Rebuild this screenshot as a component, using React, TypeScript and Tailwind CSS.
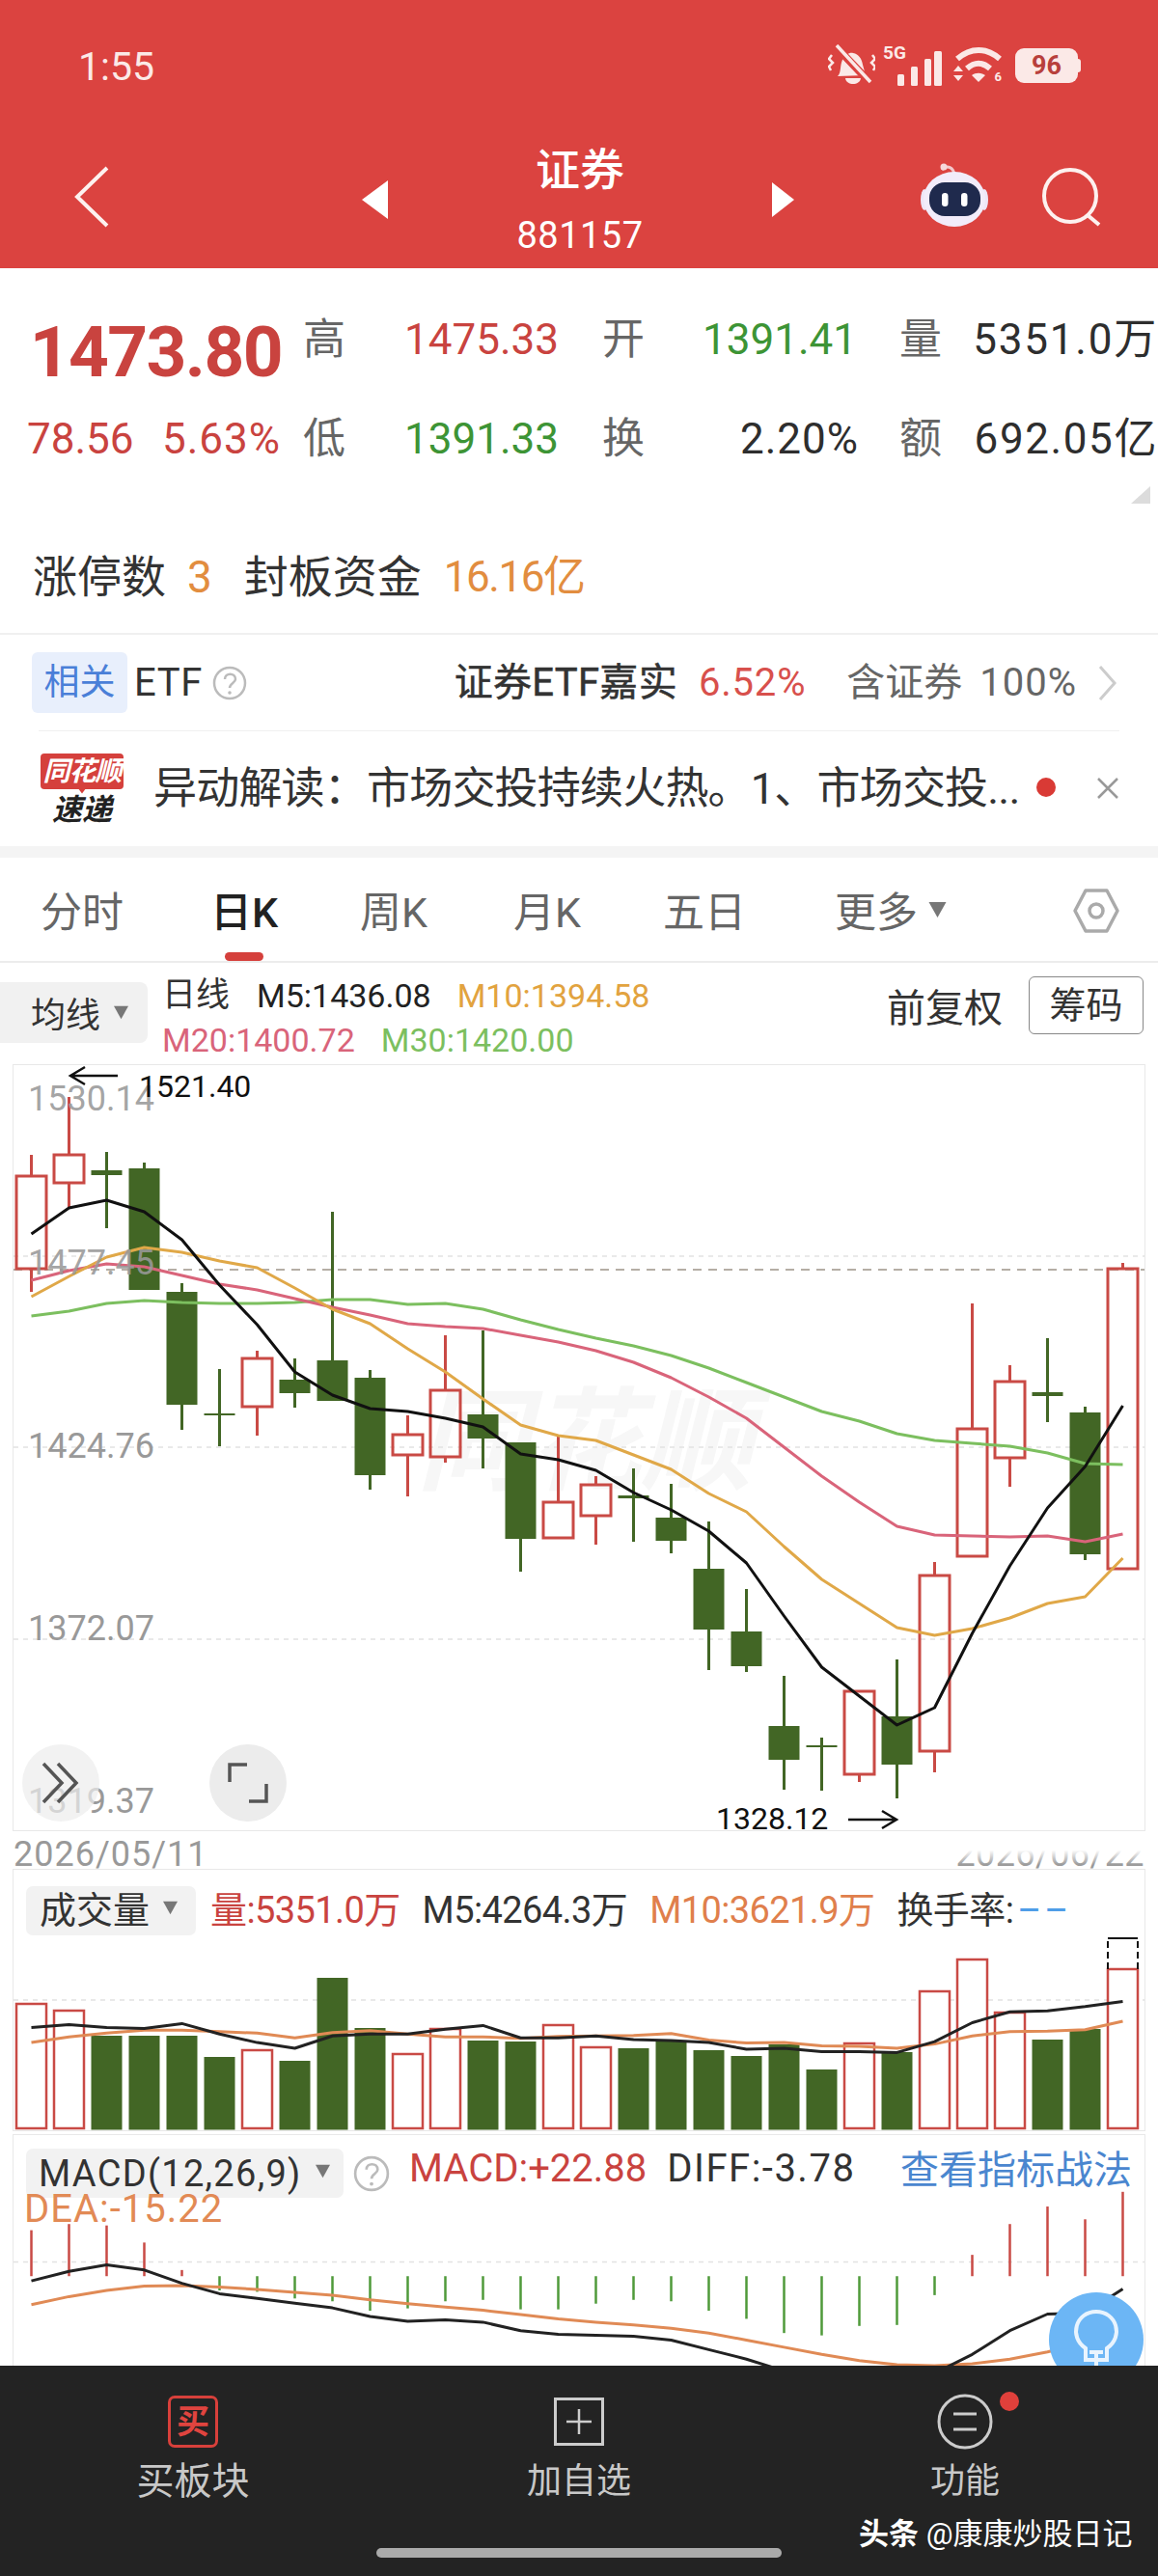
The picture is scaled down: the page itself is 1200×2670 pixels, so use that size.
import React from 'react';

const cx = (i: number) => 32.5 + 39 * i;

// [wickTop, bodyTop, bodyBottom, wickBottom, isRed]
const candles: [number, number, number, number, boolean][] = [
  [1197, 1219, 1315, 1339, true],
  [1137, 1197, 1226, 1252, true],
  [1194, 1213, 1218, 1273, false],
  [1205, 1211, 1337, 1337, false],
  [1330, 1339, 1456, 1482, false],
  [1419, 1465, 1467, 1499, false],
  [1400, 1408, 1458, 1488, true],
  [1408, 1430, 1444, 1459, false],
  [1256, 1410, 1452, 1452, false],
  [1420, 1428, 1529, 1544, false],
  [1467, 1487, 1508, 1551, true],
  [1384, 1441, 1510, 1516, true],
  [1379, 1466, 1491, 1522, false],
  [1495, 1495, 1595, 1629, false],
  [1488, 1557, 1594, 1594, true],
  [1530, 1539, 1571, 1601, true],
  [1522, 1550, 1553, 1598, false],
  [1538, 1573, 1597, 1610, false],
  [1577, 1626, 1689, 1731, false],
  [1647, 1691, 1727, 1733, false],
  [1737, 1789, 1824, 1855, false],
  [1801, 1809, 1811, 1856, false],
  [1752, 1753, 1839, 1847, true],
  [1720, 1779, 1829, 1864, false],
  [1619, 1633, 1815, 1837, true],
  [1351, 1481, 1613, 1613, true],
  [1415, 1432, 1511, 1541, true],
  [1387, 1443, 1447, 1474, false],
  [1458, 1464, 1611, 1617, false],
  [1309, 1315, 1626, 1626, true],
];

const m5 = [1279, 1252, 1244, 1256, 1285, 1332, 1373, 1422, 1446, 1460, 1463, 1470, 1479, 1507, 1513, 1524, 1547, 1565, 1587, 1620, 1675, 1728, 1758, 1788, 1770, 1693, 1623, 1563, 1520, 1457];
const m10 = [1344, 1323, 1303, 1293, 1298, 1307, 1314, 1335, 1357, 1372, 1398, 1422, 1450, 1477, 1488, 1493, 1508, 1523, 1548, 1567, 1603, 1637, 1662, 1687, 1695, 1688, 1677, 1662, 1655, 1615];
const m20 = [1327, 1317, 1310, 1313, 1322, 1331, 1337, 1346, 1355, 1363, 1372, 1375, 1377, 1384, 1391, 1400, 1412, 1428, 1448, 1470, 1500, 1530, 1557, 1582, 1591, 1592, 1593, 1592, 1598, 1590];
const m30 = [1364, 1359, 1351, 1348, 1350, 1351, 1351, 1350, 1347, 1347, 1352, 1351, 1357, 1368, 1378, 1387, 1395, 1405, 1418, 1433, 1448, 1463, 1473, 1486, 1493, 1496, 1499, 1506, 1517, 1518];

const volTops = [2077, 2084, 2110, 2110, 2110, 2132, 2125, 2136, 2050, 2102, 2129, 2103, 2115, 2116, 2099, 2122, 2123, 2116, 2125, 2131, 2119, 2145, 2118, 2127, 2064, 2031, 2086, 2114, 2103, 2041];
const volM5 = [410, 404, 410, 412, 402, 424, 442, 454, 428, 424, 424, 414, 406, 432, 432, 428, 436, 438, 442, 456, 454, 461, 461, 463, 440, 400, 377, 375, 366, 355];
const volM10 = [442, 430, 422, 416, 416, 419, 422, 432, 421, 417, 424, 430, 430, 433, 429, 428, 427, 423, 437, 443, 442, 449, 450, 454, 445, 428, 419, 418, 415, 397];

const macdEnds = [838, 825, 828, 864, 922, 965, 968, 982, 988, 1008, 1003, 988, 985, 1005, 1005, 993, 985, 988, 1008, 1025, 1055, 1060, 1040, 1038, 975, 890, 825, 788, 815, 757];
const macdDiff = [945, 925, 911, 922, 950, 972, 982, 992, 1002, 1020, 1030, 1027, 1032, 1050, 1058, 1060, 1062, 1070, 1090, 1110, 1135, 1160, 1180, 1170, 1140, 1100, 1050, 1015, 1013, 962];
const macdDea = [995, 978, 965, 956, 955, 958, 963, 969, 975, 985, 993, 1000, 1007, 1016, 1025, 1032, 1038, 1045, 1055, 1070, 1085, 1100, 1113, 1122, 1124, 1120, 1110, 1095, 1075, 1050];

const fromZoom = (z: number) => 1900 + z / 2.036;
const pts = (ys: number[]) => ys.map((y, i) => `${cx(i)},${y.toFixed(1)}`).join(' ');

const RED = '#c94a45';
const GREEN = '#426625';

const Line = ({ ys, color, width = 3 }: { ys: number[]; color: string; width?: number }) => (
  <polyline points={pts(ys)} fill="none" stroke={color} strokeWidth={width} strokeLinejoin="round" />
);

const Caret = ({ className }: { className: string }) => (
  <svg viewBox="0 0 20 18" className={className}>
    <path d="M1 1h18L10 17z" fill="#777" />
  </svg>
);

const Help = ({ className }: { className: string }) => (
  <svg viewBox="0 0 36 36" className={className}>
    <circle cx="18" cy="18" r="16" fill="none" stroke="#bbb" strokeWidth="2.5" />
    <path d="M13 14c0-7 11-7 11 0 0 4-6 4-6 9" fill="none" stroke="#bbb" strokeWidth="2.5" />
    <circle cx="18" cy="28" r="1.8" fill="#bbb" />
  </svg>
);

const StatusIcons = () => (
  <div className="flex items-center">
    {/* muted bell */}
    <svg viewBox="858 45 49 44" className="w-[49px] h-[44px]">
      <path d="M868 78c4-4 2-10 5-17 3-6 8-8 11-7 6 1 9 6 10 12l3 11z" fill="#fbe9e7" />
      <path d="M876 80h16c-1 8-15 8-16 0z" fill="#fbe9e7" />
      <path d="M866 47l36 38" stroke="#db4340" strokeWidth="8" />
      <path d="M867 46l35 38" stroke="#fbe9e7" strokeWidth="3.5" />
      <path d="M862 56l-3 4 4 4-4 4 2 4M904 56l3 4-4 4 4 4-2 4" fill="none" stroke="#fbe9e7" strokeWidth="2.5" />
    </svg>
    {/* 5G + signal */}
    <div className="relative w-[61px] h-[42px] ml-[8px]">
      <span className="absolute left-0 -top-[2px] text-[19px] leading-[20px] font-bold text-[#fbe9e7]">5G</span>
      <svg viewBox="0 0 46 36" className="absolute right-0 bottom-0 w-[46px] h-[36px]">
        <rect x="0" y="24" width="7" height="12" rx="1.5" fill="#fbe9e7" />
        <rect x="14" y="16" width="7" height="20" rx="1.5" fill="#fbe9e7" />
        <rect x="26" y="8" width="7" height="28" rx="1.5" fill="#fbe9e7" transform="translate(2 0)" />
        <rect x="38" y="0" width="8" height="36" rx="1.5" fill="#fbe9e7" />
      </svg>
    </div>
    {/* wifi */}
    <div className="relative w-[52px] h-[38px] ml-[12px]">
      <svg viewBox="988 50 52 38" className="w-[52px] h-[38px]">
        <path d="M992 62c14-12 30-12 44 0" fill="none" stroke="#fbe9e7" strokeWidth="6" />
        <path d="M1002 72c8-7 16-7 24 0" fill="none" stroke="#fbe9e7" strokeWidth="6" />
        <path d="M1007 79c4-3 10-3 14 0l-7 7z" fill="#fbe9e7" />
        <path d="M988 75l5-6 5 6zM988 79l5 6 5-6z" fill="#fbe9e7" />
      </svg>
      <span className="absolute right-[2px] bottom-0 text-[13px] leading-[14px] font-bold text-[#fbe9e7]">6</span>
    </div>
    {/* battery */}
    <div className="flex items-center ml-[12px]">
      <div className="w-[65px] h-[36px] rounded-[9px] bg-[#fbe9e7] flex items-center justify-center text-[27px] font-bold text-[#b8403c]">96</div>
      <div className="w-[3px] h-[14px] bg-[#fbe9e7] rounded-r-sm" />
    </div>
  </div>
);

const Robot = () => (
  <svg viewBox="953 170 72 66" className="w-[72px] h-[66px]">
    <path d="M976 177c6-6 12-2 13 5" fill="none" stroke="#f3c8cc" strokeWidth="3" />
    <circle cx="978" cy="174" r="3.5" fill="#f6d7da" />
    <ellipse cx="958" cy="208" rx="4" ry="11" fill="#eee6f7" />
    <ellipse cx="1020" cy="208" rx="4" ry="11" fill="#eee6f7" />
    <ellipse cx="989" cy="207.5" rx="32" ry="28.5" fill="#f2ecfa" />
    <rect x="963" y="190" width="53" height="35" rx="16" fill="#1f2a4d" />
    <rect x="976" y="201" width="6.5" height="14" rx="3.2" fill="#fff" />
    <rect x="996" y="201" width="6.5" height="14" rx="3.2" fill="#fff" />
  </svg>
);

const Header = () => (
  <div className="h-[278px] bg-[#db4340] text-white">
    <div className="h-[136px] flex items-center justify-between pl-[81px] pr-[80px]">
      <span className="text-[41px] leading-none text-[#fbe9e7] mt-[2px]">1:55</span>
      <StatusIcons />
    </div>
    <div className="h-[142px] flex items-center pl-[77px]">
      <svg viewBox="0 0 36 64" className="w-[36px] h-[64px] -mt-[7px]">
        <path d="M34 2L3 32l31 30" fill="none" stroke="#fdf1ef" strokeWidth="4" />
      </svg>
      <svg viewBox="0 0 27 40" className="w-[27px] h-[40px] ml-[262px]">
        <path d="M27 0v40L0 20z" fill="#fff" />
      </svg>
      <div className="w-[398px] flex flex-col items-center pt-[2px]">
        <span className="text-[46px] leading-[46px] font-medium">证券</span>
        <span className="text-[38px] leading-[38px] mt-[26px] tracking-[0.5px]">881157</span>
      </div>
      <svg viewBox="0 0 23 36" className="w-[23px] h-[36px]">
        <path d="M0 0v36l23-18z" fill="#fff" />
      </svg>
      <div className="ml-[130px] mt-[-10px]">
        <Robot />
      </div>
      <svg viewBox="1080 174 62 62" className="w-[62px] h-[62px] ml-[55px] -mt-[7px]">
        <circle cx="1109" cy="204" r="27" fill="none" stroke="#fdf1ef" strokeWidth="4" />
        <path d="M1127 224l12 10" stroke="#fdf1ef" strokeWidth="4" />
      </svg>
    </div>
  </div>
);

const QuoteLabel = ({ children }: { children: string }) => (
  <span className="w-[44px] text-[44px] leading-none text-[#666]">{children}</span>
);

const Quote = () => (
  <div className="relative h-[378px] pt-[24px]">
    <div className="h-[100px] flex items-center text-[44px]">
      <span className="w-[292px] text-right text-[73px] leading-none font-bold tracking-[-1.6px] text-[#c9433f] mt-[26px]">1473.80</span>
      <div className="w-[22px]" />
      <QuoteLabel>高</QuoteLabel>
      <span className="w-[221px] text-right text-[#c9433f]">1475.33</span>
      <div className="w-[45px]" />
      <QuoteLabel>开</QuoteLabel>
      <span className="w-[220px] text-right text-[#3d9435]">1391.41</span>
      <div className="w-[44px]" />
      <QuoteLabel>量</QuoteLabel>
      <span className="w-[224px] text-right text-[#2e2e2e] whitespace-nowrap tracking-[1.8px]">5351.0万</span>
    </div>
    <div className="h-[100px] mt-[3px] flex items-center text-[44px]">
      <span className="w-[28px]" />
      <span className="w-[111px] text-[#c9433f]">78.56</span>
      <span className="w-[152px] text-right text-[#c9433f] whitespace-nowrap tracking-[1px]">5.63%</span>
      <div className="w-[23px]" />
      <QuoteLabel>低</QuoteLabel>
      <span className="w-[221px] text-right text-[#3d9435]">1391.33</span>
      <div className="w-[45px]" />
      <QuoteLabel>换</QuoteLabel>
      <span className="w-[222px] text-right text-[#2e2e2e] tracking-[1px]">2.20%</span>
      <div className="w-[42px]" />
      <QuoteLabel>额</QuoteLabel>
      <span className="w-[224px] text-right text-[#2e2e2e] whitespace-nowrap tracking-[1.6px]">692.05亿</span>
    </div>
    <svg viewBox="0 0 20 18" className="absolute right-[8px] top-[226px] w-[20px] h-[18px]">
      <path d="M20 0v18H0z" fill="#dcdcdc" />
    </svg>
    <div className="h-[60px] mt-[63px] flex items-center pl-[34px] text-[46px] whitespace-nowrap">
      <span className="text-[#333]">涨停数</span>
      <span className="ml-[22px] text-[#e28d3f]">3</span>
      <span className="ml-[33px] text-[#333]">封板资金</span>
      <span className="ml-[23px] text-[#e28d3f] text-[44px] tracking-[-1.5px]">16.16亿</span>
    </div>
  </div>
);

const EtfRow = () => (
  <div className="h-[101px] border-t-2 border-[#f0f0f0] pl-[33px] pr-[42px] flex items-center text-[40px] whitespace-nowrap">
    <span className="w-[99px] h-[63px] rounded-[6px] bg-[#e8effc] text-[#4a7fd8] text-[37px] flex items-center justify-center">相关</span>
    <span className="ml-[7px] text-[#333] tracking-[0.6px]">ETF</span>
    <Help className="w-[36px] h-[36px] ml-[10px]" />
    <span className="ml-auto text-[#333] tracking-[0.3px] [-webkit-text-stroke:0.5px_#333]">证券ETF嘉实</span>
    <span className="ml-[22px] text-[#d8504c] tracking-[0.8px]">6.52%</span>
    <span className="ml-[42px] text-[#666]">含证券</span>
    <span className="ml-[18px] text-[#666] tracking-[1px]">100%</span>
    <svg viewBox="0 0 20 36" className="w-[20px] h-[36px] ml-[22px]">
      <path d="M2 1l15 17L2 35" fill="none" stroke="#ccc" strokeWidth="3" />
    </svg>
  </div>
);

const NewsRow = () => (
  <div className="h-[120px] mx-[40px] border-t border-[#f0f0f0] flex items-center whitespace-nowrap">
    <div className="w-[90px] flex flex-col items-center">
      <div className="relative w-[86px] h-[37px] rounded-[4px] bg-[#d5403c] text-white text-[28px] leading-[37px] text-center italic font-bold tracking-[-1px]">
        同花顺
        <div className="absolute left-[37px] top-[34px] w-[12px] h-[8px] bg-[#d5403c] [clip-path:polygon(0_0,100%_0,50%_100%)]" />
      </div>
      <span className="text-[31px] leading-[31px] mt-[6px] italic font-bold text-[#222]">速递</span>
    </div>
    <span className="ml-[29px] text-[45px] leading-[50px] text-[#333] w-[905px] tracking-[-0.8px]">异动解读：市场交投持续火热。1、市场交投...</span>
    <span className="ml-[10px] w-[20px] h-[20px] rounded-full bg-[#d93a35] -mt-[4px]" />
    <svg viewBox="0 0 22 22" className="w-[22px] h-[22px] ml-[43px] -mt-[1px]">
      <path d="M1 1l20 20M21 1L1 21" stroke="#999" strokeWidth="2.5" />
    </svg>
  </div>
);

const Tabs = () => (
  <div className="h-[109px] border-b-2 border-[#ececec] flex items-center pl-[42px] pr-[40px] pt-[8px] text-[43px] text-[#666] whitespace-nowrap">
    <span className="w-[178px]">分时</span>
    <span className="relative w-[153px] text-[#222] font-medium -ml-[2px]">
      日K
      <span className="absolute left-[15px] top-[73px] w-[40px] h-[9px] rounded-full bg-[#d5403c]" />
    </span>
    <span className="w-[159px] ml-[2px]">周K</span>
    <span className="w-[155px]">月K</span>
    <span className="w-[178px]">五日</span>
    <span>更多</span>
    <Caret className="w-[23px] h-[18px] ml-[9px] -mt-[8px]" />
    <svg viewBox="0 0 48 46" className="w-[48px] h-[46px] ml-auto -mt-[6px]">
      <path d="M13 2h22l11 21-11 21H13L2 23z" fill="none" stroke="#aaa" strokeWidth="3.5" strokeLinejoin="round" />
      <circle cx="24" cy="23" r="7" fill="none" stroke="#aaa" strokeWidth="3.5" />
    </svg>
  </div>
);

const Toolbar = () => (
  <div className="h-[105px] flex whitespace-nowrap">
    <div className="w-[153px] h-[63px] mt-[20px] bg-[#f1f1f1] rounded-r-[8px] pl-[32px] pt-[6px] flex items-center text-[36px] text-[#333]">
      均线
      <Caret className="w-[17px] h-[15px] ml-[13px] -mt-[6px]" />
    </div>
    <div className="ml-[15px] w-[520px] pt-[14px] text-[34px] leading-[40px]">
      <div className="flex">
        <span className="text-[35px] text-[#333]">日线</span>
        <span className="ml-[28px] text-[#222]">M5:1436.08</span>
        <span className="ml-[27px] text-[#e2a33f]">M10:1394.58</span>
      </div>
      <div className="flex mt-[6px]">
        <span className="text-[#d9647a]">M20:1400.72</span>
        <span className="ml-[27px] text-[#7cbf5f]">M30:1420.00</span>
      </div>
    </div>
    <span className="ml-[231px] mt-[28px] text-[40px] leading-[40px] text-[#333]">前复权</span>
    <span className="ml-[27px] mt-[14px] w-[119px] h-[60px] border border-[#888] rounded-[6px] flex items-center justify-center text-[38px] text-[#333]">筹码</span>
  </div>
);

const KChart = () => (
  <div className="relative h-[795px] mx-[13px] border border-[#e8e8e8]">
    <span className="absolute left-[418px] top-[326px] text-[116px] leading-[130px] font-bold italic text-[#f7f7f7] whitespace-nowrap">同花顺</span>
    <svg viewBox="14 1104 1172 793" className="absolute inset-0 w-full h-full">
      <line x1="14" x2="1186" y1="1302" y2="1302" stroke="#e2e2e2" strokeWidth="1.5" strokeDasharray="5 5" />
      <line x1="14" x2="1186" y1="1316" y2="1316" stroke="#b5aea5" strokeWidth="2" strokeDasharray="9 7" />
      <line x1="14" x2="1186" y1="1500" y2="1500" stroke="#e2e2e2" strokeWidth="1.5" strokeDasharray="5 5" />
      <line x1="14" x2="1186" y1="1699" y2="1699" stroke="#e2e2e2" strokeWidth="1.5" strokeDasharray="5 5" />
      {candles.map(([wt, bt, bb, wb, red], i) => {
        const c = red ? RED : GREEN;
        return (
          <g key={i}>
            {wt < bt && <line x1={cx(i)} x2={cx(i)} y1={wt} y2={bt} stroke={c} strokeWidth="3" />}
            {wb > bb && <line x1={cx(i)} x2={cx(i)} y1={bb} y2={wb} stroke={c} strokeWidth="3" />}
            {red ? (
              <rect x={cx(i) - 15.5} y={bt} width="31" height={bb - bt} fill="none" stroke={c} strokeWidth="3" />
            ) : (
              <rect x={cx(i) - 16} y={bt} width="32" height={bb - bt} fill={c} />
            )}
          </g>
        );
      })}
      <Line ys={m30} color="#7cbf5f" />
      <Line ys={m20} color="#d9647a" />
      <Line ys={m10} color="#e0a848" />
      <Line ys={m5} color="#111" />
      {/* max / min arrows */}
      <path d="M122 1115H73M88 1106l-15 9 15 9" fill="none" stroke="#111" strokeWidth="2.5" />
      <path d="M879 1886h50M914 1877l15 9-15 9" fill="none" stroke="#111" strokeWidth="2.5" />
    </svg>
    <span className="absolute left-[15px] top-[17px] text-[36px] leading-[36px] text-[#999]/90">1530.14</span>
    <span className="absolute left-[15px] top-[187px] text-[36px] leading-[36px] text-[#999]/90">1477.45</span>
    <span className="absolute left-[15px] top-[377px] text-[36px] leading-[36px] text-[#999]">1424.76</span>
    <span className="absolute left-[15px] top-[566px] text-[36px] leading-[36px] text-[#999]">1372.07</span>
    <span className="absolute left-[15px] top-[745px] text-[36px] leading-[36px] text-[#999]">1319.37</span>
    <span className="absolute left-[130px] top-[6px] text-[32px] leading-[32px] text-[#111]">1521.40</span>
    <span className="absolute left-[728px] top-[765px] text-[32px] leading-[32px] text-[#111]">1328.12</span>
    <div className="absolute left-[9px] top-[704px] w-[80px] h-[80px] rounded-full bg-[#ececec]/70 flex items-center justify-center">
      <svg viewBox="0 0 40 44" className="w-[40px] h-[44px]">
        <path d="M2 2l19 20L2 42M17 2l19 20-19 20" fill="none" stroke="#555" strokeWidth="3.5" />
      </svg>
    </div>
    <div className="absolute left-[203px] top-[704px] w-[80px] h-[80px] rounded-full bg-[#ececec] flex items-center justify-center">
      <svg viewBox="0 0 42 42" className="w-[42px] h-[42px]">
        <path d="M2 20V2h18M40 22v18H22" fill="none" stroke="#555" strokeWidth="3.5" />
      </svg>
    </div>
  </div>
);

const DateRow = () => (
  <div className="relative h-[39px] px-[14px] flex items-end justify-between text-[36px] leading-[30px] text-[#999]">
    <span className="tracking-[1px]">2026/05/11</span>
    <span className="tracking-[0.4px]">2026/06/22</span>
    <div className="absolute right-0 top-0 w-[220px] h-full bg-gradient-to-b from-white from-50% to-white/0 to-90%" />
  </div>
);

const VolumePanel = () => (
  <div className="relative h-[272px] mx-[13px] border border-[#e8e8e8]">
    <svg viewBox="14 1938 1172 270" className="absolute inset-0 w-full h-full">
      <line x1="14" x2="1186" y1="2073" y2="2073" stroke="#e2e2e2" strokeWidth="1.5" strokeDasharray="5 5" />
      {volTops.map((t, i) =>
        candles[i][4] ? (
          <rect key={i} x={cx(i) - 15.5} y={t} width="31" height={2206 - t} fill="#fff" stroke={RED} strokeWidth="2.5" />
        ) : (
          <rect key={i} x={cx(i) - 16} y={t} width="32" height={2207.5 - t} fill={GREEN} />
        ),
      )}
      <path d="M1148 2041v-32h31v32" fill="none" stroke="#111" strokeWidth="2" strokeDasharray="7 4" />
      <line x1="1148" x2="1179" y1="2009" y2="2009" stroke="#111" strokeWidth="2" />
      <Line ys={volM10.map(fromZoom)} color="#e08a55" />
      <Line ys={volM5.map(fromZoom)} color="#222" />
    </svg>
    <div className="relative flex items-center pt-[14px] pl-[13px] text-[38px] whitespace-nowrap">
      <div className="w-[176px] h-[51px] rounded-[7px] bg-[#f2f2f2] pl-[14px] flex items-center text-[#333]">
        成交量
        <Caret className="w-[17px] h-[15px] ml-[13px] -mt-[6px]" />
      </div>
      <span className="ml-[15px] text-[#c9433f] tracking-[-0.6px]">量:5351.0万</span>
      <span className="ml-[23px] text-[#333] tracking-[-0.6px]">M5:4264.3万</span>
      <span className="ml-[23px] text-[#e07f4c] tracking-[-0.6px]">M10:3621.9万</span>
      <span className="ml-[23px] text-[#333] tracking-[-0.6px]">换手率:</span>
      <span className="ml-[4px] text-[#4f9de8] tracking-[3px]">––</span>
    </div>
  </div>
);

const MacdPanel = () => (
  <div className="relative flex-1 mt-[3px] mx-[13px] border-x border-t border-[#e8e8e8] overflow-hidden">
    <svg viewBox="14 2213 1172 239" className="absolute inset-0 w-full h-full">
      <line x1="14" x2="1186" y1="2344.5" y2="2344.5" stroke="#e2e2e2" strokeWidth="1.5" strokeDasharray="5 5" />
      {macdEnds.map((z, i) => {
        const up = i < 5 || i > 24;
        return <line key={i} x1={cx(i)} x2={cx(i)} y1={fromZoom(935)} y2={fromZoom(z)} stroke={up ? '#c94a45' : '#4f9a3a'} strokeWidth="2.5" />;
      })}
      <Line ys={macdDea.map(fromZoom)} color="#e08a55" />
      <Line ys={macdDiff.map(fromZoom)} color="#222" />
    </svg>
    <div className="relative flex pt-[14px] pl-[13px] pr-[13px] whitespace-nowrap">
      <div className="w-[329px] h-[51px] rounded-[7px] bg-[#f2f2f2] pl-[13px] flex items-center text-[38px] text-[#333]">
        <span className="tracking-[1.3px] mt-[2px]">MACD(12,26,9)</span>
        <Caret className="w-[17px] h-[15px] ml-[13px] -mt-[4px]" />
      </div>
      <Help className="w-[38px] h-[38px] ml-[10px] mt-[7px]" />
      <span className="ml-[20px] -mt-[9px] text-[40px] text-[#c9433f]">MACD:+22.88</span>
      <span className="ml-[21px] -mt-[9px] text-[40px] text-[#333] tracking-[1.5px]">DIFF:-3.78</span>
      <span className="ml-auto -mt-[7px] text-[40px] text-[#4a86cf]">查看指标战法</span>
    </div>
    <span className="absolute left-[11px] top-[55px] text-[40px] leading-[44px] text-[#e28a55] tracking-[1px]">DEA:-15.22</span>
    <div className="absolute left-[1073px] top-[163px] w-[98px] h-[98px] rounded-full bg-[#6cb6f5]">
      <svg viewBox="0 0 98 98" className="w-[98px] h-[98px]">
        <path d="M38 58c-18-12-10-38 11-38s29 26 11 38v12H38zM42 62h14M49 62v14" fill="none" stroke="#fff" strokeWidth="4" opacity="0.85" />
      </svg>
    </div>
  </div>
);

const NavItem = ({ icon, label, className }: { icon: React.ReactNode; label: string; className: string }) => (
  <div className={`flex flex-col items-center ${className}`}>
    <div className="h-[56px] flex items-center">{icon}</div>
    <span className="mt-[12px] leading-[44px] text-[#c8c8c8]">{label}</span>
  </div>
);

const BottomNav = () => (
  <div className="relative h-[218px] bg-[#232323] pt-[30px] flex whitespace-nowrap">
    <NavItem
      className="w-[400px] text-[39px]"
      label="买板块"
      icon={
        <div className="w-[52px] h-[54px] rounded-[7px] border-[3px] border-[#d8403b] flex items-center justify-center text-[34px] leading-none font-bold text-[#e0443f]">买</div>
      }
    />
    <NavItem
      className="w-[400px] text-[36px]"
      label="加自选"
      icon={
        <svg viewBox="0 0 52 50" className="w-[52px] h-[50px]">
          <rect x="1.5" y="1.5" width="49" height="47" fill="none" stroke="#ccc" strokeWidth="3" />
          <path d="M26 12v26M13 25h26" stroke="#ccc" strokeWidth="2.5" />
        </svg>
      }
    />
    <NavItem
      className="w-[400px] text-[36px]"
      label="功能"
      icon={
        <svg viewBox="0 0 58 58" className="w-[58px] h-[58px]">
          <circle cx="29" cy="29" r="27" fill="none" stroke="#ccc" strokeWidth="3" />
          <path d="M17 21h24M17 37h24" stroke="#ccc" strokeWidth="3" />
        </svg>
      }
    />
    <span className="absolute left-[1036px] top-[27px] w-[20px] h-[20px] rounded-full bg-[#e0403b]" />
    <span className="absolute left-[890px] top-[156px] text-[31px] leading-[38px] text-white">
      <span className="font-bold">头条</span> @康康炒股日记
    </span>
    <span className="absolute left-[390px] top-[189px] w-[420px] h-[10px] rounded-full bg-[#aaa]" />
  </div>
);

export default function App() {
  return (
    <div className="w-[1200px] h-[2670px] overflow-hidden bg-white flex flex-col font-['Roboto','Noto_Sans_CJK_SC',sans-serif]">
      <Header />
      <Quote />
      <EtfRow />
      <NewsRow />
      <div className="h-[12px] bg-[#f4f4f4]" />
      <Tabs />
      <Toolbar />
      <KChart />
      <DateRow />
      <VolumePanel />
      <MacdPanel />
      <BottomNav />
    </div>
  );
}
